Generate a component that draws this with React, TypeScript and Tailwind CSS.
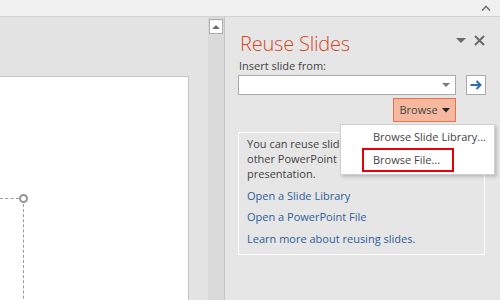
import React from 'react';

const font = { fontFamily: '"Open Sans", "Noto Sans", sans-serif' };

const ReusePane: React.FC = () => {
  return (
    <div className="relative flex-1 bg-[#e6e6e6] pl-[13px] pr-[14px] pt-[14px]">
      {/* Header */}
      <div className="flex items-start justify-between">
        <h1 className="ml-[2px] text-[20px] leading-[26px] font-light text-[#d24726] tracking-[-0.2px]">Reuse Slides</h1>
        <div className="flex items-center gap-[8px] pt-[4px] pr-[1px]">
          <svg width="10" height="6" viewBox="0 0 10 6">
            <path d="M0 0 L10 0 L5 5 Z" fill="#6b6b6b" />
          </svg>
          <svg width="11" height="11" viewBox="0 0 11 11">
            <path d="M1 1 L10 10 M10 1 L1 10" stroke="#6b6b6b" strokeWidth="2" />
          </svg>
        </div>
      </div>
      <div className="ml-[1px] text-[11px] leading-[16px] text-[#444] mt-[1px]">Insert slide from:</div>

      {/* Path input */}
      <div className="flex items-center gap-[10px] mt-[1px]">
        <div className="w-[218px] h-[20px] bg-white border border-[#ababab] flex items-center justify-end pr-[5px]">
          <svg width="8" height="4" viewBox="0 0 8 4">
            <path d="M0 0 L8 0 L4 4 Z" fill="#7a7a7a" />
          </svg>
        </div>
        <div className="w-[20px] h-[20px] bg-white border border-[#ababab] flex items-center justify-center">
          <svg width="12" height="10" viewBox="0 0 12 10">
            <path d="M0.5 5 H10 M6.5 1 L10.5 5 L6.5 9" stroke="#2f6db5" strokeWidth="2" fill="none" />
          </svg>
        </div>
      </div>

      {/* Browse button */}
      <div className="flex mt-[3px] pl-[155px]">
        <div className="w-[63px] h-[24px] bg-[#f6b99f] border border-[#e8704b] flex items-center justify-center gap-[4px] text-[11px] text-[#444]">
          <span>Browse</span>
          <svg width="8" height="5" viewBox="0 0 8 5">
            <path d="M0 0 L8 0 L4 4.5 Z" fill="#222" />
          </svg>
        </div>
      </div>

      {/* Info box */}
      <div className="mt-[10px] w-[247px] h-[123px] border border-white pl-[8px] pr-[4px] pt-[3px] text-[11px] text-[#444]">
        <p className="leading-[15px]">
          You can reuse slides from a Slide Library or other PowerPoint files in your current presentation.
        </p>
        <div className="mt-[7px] leading-[15px] text-[#2e5e9c]">Open a Slide Library</div>
        <div className="mt-[6px] leading-[15px] text-[#2e5e9c]">Open a PowerPoint File</div>
        <div className="mt-[7px] leading-[15px] text-[#2e5e9c]">Learn more about reusing slides.</div>
      </div>

      {/* Browse menu */}
      <div className="absolute left-[115px] top-[107px] w-[155px] h-[51px] bg-white border border-[#d0d0d0] shadow-[2px_2px_3px_rgba(0,0,0,0.18)] text-[11px] text-[#444] whitespace-nowrap">
        <div className="pl-[32px] pt-[3px] leading-[18px]">Browse Slide Library...</div>
        <div className="ml-[21px] mt-[2px] w-[92px] h-[24px] border-2 border-[#e8000b] pl-[9px] leading-[20px]">
          Browse File...
        </div>
      </div>
    </div>
  );
};

const App: React.FC = () => {
  return (
    <div className="w-[500px] h-[300px] overflow-hidden flex flex-col" style={font}>
      {/* Ribbon edge */}
      <div className="h-[17px] bg-[#f0f0f0] border-b border-[#d2d2d2] flex justify-end items-start pr-[9px] pt-[5px]">
        <svg width="10" height="6" viewBox="0 0 10 6">
          <path d="M1 5.5 L5 1.5 L9 5.5" stroke="#777" strokeWidth="1.6" fill="none" />
        </svg>
      </div>

      <div className="flex-1 flex">
        {/* Slide editor */}
        <div className="w-[209px] bg-[#e3e3e3] pt-[59px]">
          <div className="relative w-[189px] h-full bg-white border-t border-r border-[#c4c4c4]">
            <div className="absolute left-0 top-[121px] w-[19px] border-t border-dashed border-[#999]" />
            <div className="absolute left-[19px] top-[117px] w-[9px] h-[9px] rounded-full border-2 border-[#959595] bg-white" />
            <div className="absolute left-[23px] top-[127px] h-[120px] border-l border-dashed border-[#999]" />
          </div>
        </div>

        {/* Scrollbar */}
        <div className="w-[16px] bg-[#dadada] pt-[2px] pl-[1px]">
          <div className="w-[14px] h-[15px] bg-white border border-[#ababab] flex items-center justify-center">
            <svg width="8" height="4" viewBox="0 0 8 4">
              <path d="M0 4 L8 4 L4 0 Z" fill="#6e6e6e" />
            </svg>
          </div>
        </div>
        <div className="w-px bg-[#c4c4c4]" />

        <ReusePane />
      </div>
    </div>
  );
};

export default App;
